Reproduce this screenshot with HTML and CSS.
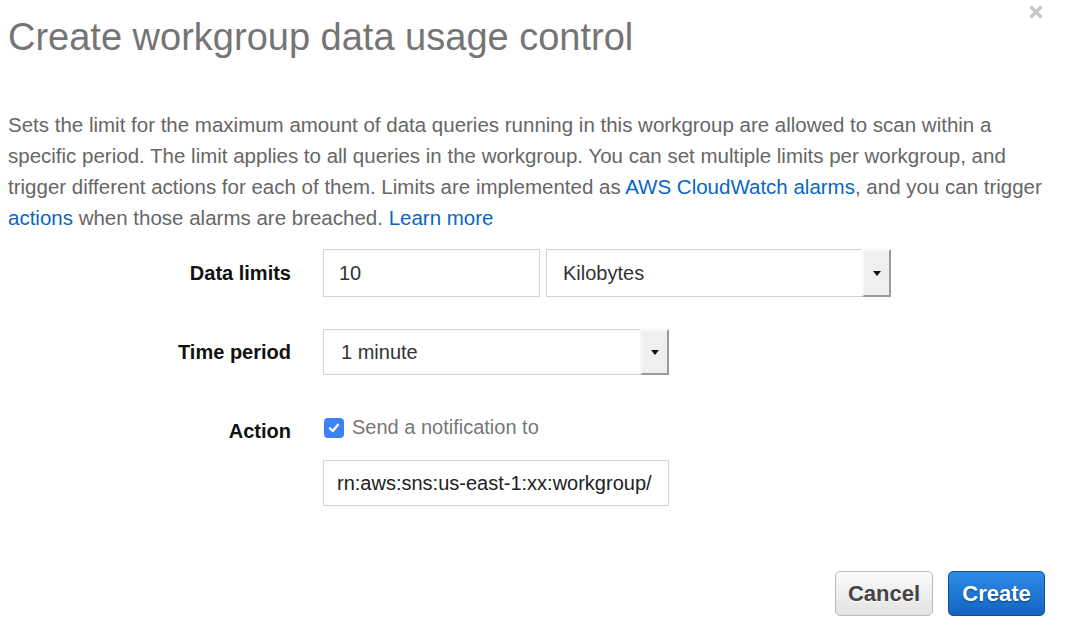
FILE: index.html
```html
<!DOCTYPE html>
<html>
<head>
<meta charset="utf-8">
<link rel="stylesheet" href="styles.css">
</head>
<body>
<div class="modal">
  <div class="close" aria-label="Close">
    <svg width="16" height="16" viewBox="0 0 16 16"><path d="M2.5 2.5 L13.5 13.5 M13.5 2.5 L2.5 13.5" stroke="#c8c8c8" stroke-width="3.6" stroke-linecap="butt"/></svg>
  </div>
  <h1 class="title">Create workgroup data usage control</h1>
  <p class="desc">Sets the limit for the maximum amount of data queries running in this workgroup are allowed to scan within a<br>specific period. The limit applies to all queries in the workgroup. You can set multiple limits per workgroup, and<br>trigger different actions for each of them. Limits are implemented as <a class="link">AWS CloudWatch alarms</a>, and you can trigger<br><a class="link">actions</a> when those alarms are breached. <a class="link">Learn more</a></p>

  <div class="form">
    <div class="label row1">Data limits</div>
    <div class="field row1">
      <div class="input w-num">10</div>
      <div class="select w-unit"><span class="select-text">Kilobytes</span><span class="caret"><i></i></span></div>
    </div>

    <div class="label row2">Time period</div>
    <div class="field row2">
      <div class="select w-wide"><span class="select-text tp">1 minute</span><span class="caret"><i></i></span></div>
    </div>

    <div class="label row3">Action</div>
    <div class="field row3 check-row">
      <span class="checkbox"><svg width="14" height="14" viewBox="0 0 14 14"><path d="M3 7.3 L5.8 10 L11 3.8" fill="none" stroke="#fff" stroke-width="2.4" stroke-linecap="round" stroke-linejoin="round"/></svg></span>
      <span class="check-label">Send a notification to</span>
    </div>

    <div class="label row4"></div>
    <div class="field row4">
      <div class="input w-wide arn">rn:aws:sns:us-east-1:xx:workgroup/</div>
    </div>
  </div>

  <div class="footer">
    <button class="btn btn-cancel">Cancel</button>
    <button class="btn btn-create">Create</button>
  </div>
</div>
</body>
</html>
```

FILE: styles.css
```css
html, body {
  margin: 0;
  padding: 0;
  background: #fff;
}
body {
  font-family: "Liberation Sans", Arial, Helvetica, sans-serif;
  width: 1068px;
  height: 644px;
  overflow: hidden;
}
.modal {
  position: relative;
  padding: 0 8px;
}
.close {
  position: absolute;
  top: 4px;
  left: 1028px;
  width: 16px;
  height: 16px;
}
.close svg { display: block; }
.title {
  margin: 0;
  padding-top: 15px;
  font-size: 38px;
  line-height: 44px;
  font-weight: normal;
  color: #757575;
}
.desc {
  margin: 50px -20px 0 0;
  font-size: 20.5px;
  line-height: 31px;
  color: #666;
  white-space: nowrap;
}
.link {
  color: #0a66c2;
  text-decoration: none;
}
.form {
  display: grid;
  grid-template-columns: 283px auto;
  column-gap: 32px;
  margin-top: 16px;
  align-items: center;
}
.label {
  text-align: right;
  font-weight: bold;
  font-size: 20px;
  color: #111;
}
.row1 { grid-row: 1; }
.row2 { grid-row: 2; margin-top: 32px; }
.row3 { grid-row: 3; margin-top: 37px; }
.row4 { grid-row: 4; margin-top: 17px; }
.label.row3 { margin-top: 45px; }
.field {
  display: flex;
  gap: 6px;
}
.input, .select {
  box-sizing: border-box;
  height: 48px;
  border: 1px solid #d2d2d2;
  background: #fff;
  font-size: 20px;
  color: #333;
  display: flex;
  align-items: center;
}
.input { padding-left: 15px; }
.w-num { width: 217px; }
.w-unit { width: 345px; }
.w-wide { width: 346px; }
.row2 .select, .row4 .input { height: 46px; }
.select { position: relative; }
.select-text {
  flex: 1;
  padding-left: 16px;
}
.select-text.tp { padding-left: 17px; }
.caret {
  align-self: stretch;
  width: 29px;
  box-sizing: border-box;
  background: #efefef;
  border-top: 2px solid #f7f7f7;
  border-left: 2px solid #f7f7f7;
  border-right: 2px solid #9a9a9a;
  border-bottom: 2px solid #9a9a9a;
  margin: -1px -1px -1px 0;
  display: flex;
  align-items: center;
  justify-content: center;
}
.caret i {
  display: block;
  width: 0;
  height: 0;
  border-left: 4.5px solid transparent;
  border-right: 4.5px solid transparent;
  border-top: 5px solid #111;
}
.check-row {
  align-items: center;
  gap: 8px;
  padding-left: 1px;
}
.checkbox {
  width: 20px;
  height: 20px;
  border-radius: 4px;
  background: #3b82f6;
  display: flex;
  align-items: center;
  justify-content: center;
}
.checkbox svg { display: block; }
.check-label {
  font-size: 20px;
  color: #777;
}
.arn {
  padding-left: 13px;
  overflow: hidden;
  white-space: nowrap;
  color: #222;
}
.footer {
  display: flex;
  justify-content: flex-end;
  gap: 15px;
  margin-top: 65px;
  padding-right: 15px;
}
.btn {
  font-family: "Liberation Sans", Arial, Helvetica, sans-serif;
  font-weight: bold;
  font-size: 22px;
  height: 45px;
  border-radius: 5px;
  padding: 0;
  cursor: pointer;
}
.btn-cancel {
  width: 98px;
  color: #444;
  background: linear-gradient(#fafafa, #e3e3e3);
  border: 1px solid #bdbdbd;
  text-shadow: 0 1px 0 #fff;
}
.btn-create {
  width: 97px;
  color: #fff;
  background: linear-gradient(#2f8ae8, #1265c2);
  border: 1px solid #144f8c;
  text-shadow: 0 1px 2px rgba(0,0,0,0.45);
}
```
